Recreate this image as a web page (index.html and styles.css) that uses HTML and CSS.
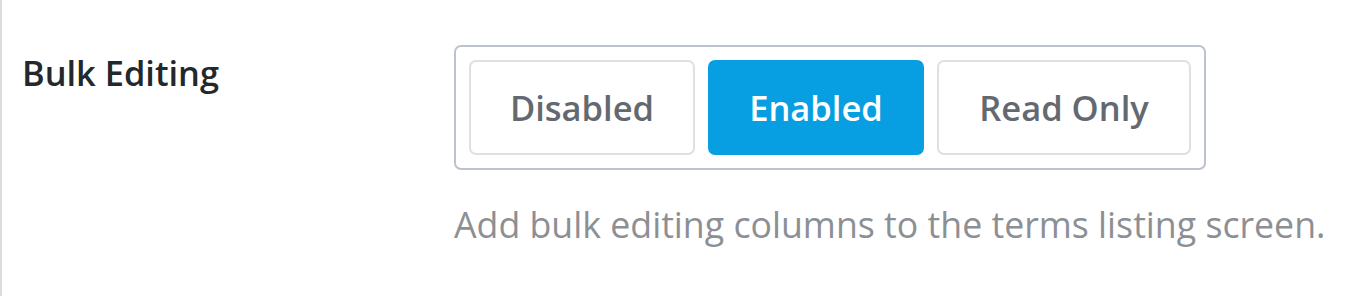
FILE: index.html
```html
<!DOCTYPE html>
<html>
<head>
<meta charset="utf-8">
<link rel="stylesheet" href="styles.css">
</head>
<body>
<div class="page">
  <div class="row">
    <div class="label">Bulk Editing</div>
    <div class="field">
      <div class="group">
        <button class="opt">Disabled</button>
        <button class="opt active">Enabled</button>
        <button class="opt">Read Only</button>
      </div>
      <p class="desc">Add bulk editing columns to the terms listing screen.</p>
    </div>
  </div>
</div>
</body>
</html>
```
FILE: styles.css
```css
html, body {
  margin: 0;
  padding: 0;
  background: #fff;
}
.page {
  height: 296px;
  border-left: 2px solid #dcdcde;
  box-sizing: border-box;
  font-family: "Open Sans", "Noto Sans", sans-serif;
}
.row {
  display: flex;
  padding-top: 45px;
}
.label {
  width: 432px;
  padding-left: 20px;
  font-size: 34.4px;
  font-weight: 600;
  color: #23282d;
  line-height: 1;
  padding-top: 11px;
  white-space: nowrap;
}
.field {
  display: flex;
  flex-direction: column;
  align-items: flex-start;
}
.group {
  display: flex;
  gap: 13px;
  padding: 13px;
  border: 2px solid #bcc3cc;
  border-radius: 7px;
}
.opt {
  font-family: inherit;
  font-size: 34.5px;
  font-weight: 600;
  color: #646970;
  background: #fff;
  border: 2px solid #dde1e6;
  border-radius: 7px;
  height: 95px;
  padding: 0;
  cursor: pointer;
}
.opt:nth-child(1) { width: 226px; }
.opt:nth-child(2) { width: 216px; }
.opt:nth-child(3) { width: 254px; }
.opt.active {
  background: #089ee2;
  border-color: #089ee2;
  color: #fff;
}
.desc {
  margin: 0;
  margin-top: 33px;
  font-size: 35.7px;
  line-height: 1.2;
  color: #8c8f94;
  white-space: nowrap;
}
```
